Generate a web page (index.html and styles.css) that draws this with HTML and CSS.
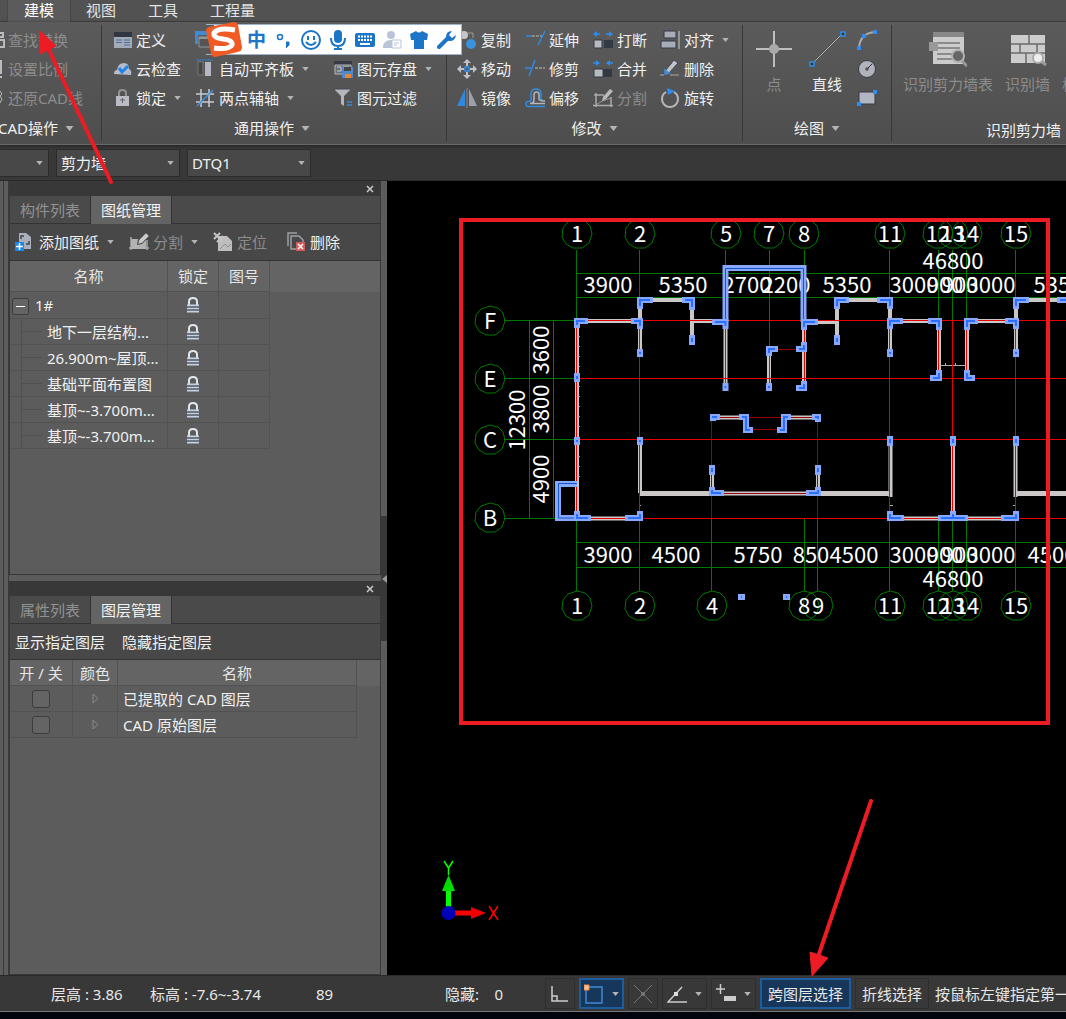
FILE: index.html
```html
<!DOCTYPE html>
<html lang="zh-CN">
<head>
<meta charset="utf-8">
<meta name="viewport" content="width=device-width, initial-scale=1">
<title>建模</title>
<link rel="stylesheet" href="styles.css">
</head>
<body>
<svg class="defs" width="0" height="0" aria-hidden="true">
  <symbol id="caret" viewBox="0 0 8 5"><path d="M0 0h8L4 5z" fill="#b4b4b4"/></symbol>
  <symbol id="lock" viewBox="0 0 14 16"><path d="M3 8V4.500Q3 1 7 1t4 3.500V8" fill="none" stroke="#dfe6ee" stroke-width="2"/><path d="M1 8.500h12M1 11.500h12M1 14.500h12" stroke="#c5d2e2" stroke-width="2"/><path d="M1 10h12M1 13h12" stroke="#4a5664"/></symbol>
  <symbol id="split" viewBox="0 0 20 20"><path d="M2 5v13M18 8v10M0 16h20" stroke="#a8a8a8" stroke-width="1.500" fill="none"/><path d="M2 7h7l-1 6 5-1 4-4v9H2z" fill="#b2b2b2"/><path d="M9 12l1-4 7-7 3 3-7 7z" fill="#cacaca" stroke="#555" stroke-width=".5"/></symbol>
</svg>

<nav class="menu">
  <a class="menu-tab active" href="#">建模</a>
  <a class="menu-tab" href="#">视图</a>
  <a class="menu-tab" href="#">工具</a>
  <a class="menu-tab" href="#">工程量</a>
</nav>

<header class="ribbon">
  <section class="group cad">
    <div class="tools">
      <button class="tool off"><svg class="half" viewBox="0 0 6 20"><path d="M0 3h3v4H0M0 10h4v7H0" fill="none" stroke="#bbb" stroke-width="2"/></svg>查找替换</button>
      <button class="tool off"><svg class="half" viewBox="0 0 6 20"><path d="M1 1v14M0 18h2" fill="none" stroke="#bbb" stroke-width="2"/></svg>设置比例</button>
      <button class="tool off"><svg class="half" viewBox="0 0 6 20"><path d="M0 3l2 3-2 2 2 3-2 4" fill="none" stroke="#bbb" stroke-width="1"/></svg>还原CAD线</button>
    </div>
    <button class="group-title">CAD操作<svg class="caret"><use href="#caret"/></svg></button>
  </section>
  <section class="group common">
    <div class="tools">
      <button class="tool"><svg viewBox="0 0 20 20"><path d="M2 2h18v5H2z" fill="#2f3842"/><path d="M2 7h18v11H2z" fill="#a3abb8"/><path d="M4 10h6M4 12.500h6M12 10h6M12 12.500h6M12 15h6" stroke="#4c6f9a"/></svg>定义</button>
      <button class="tool"><svg viewBox="0 0 20 20"><path d="M2 15q0-4 3-4 1-7 7-7 5 0 5 6 3 1 2 6z" fill="#b4bccb"/><path d="M7 9l3 4 6-6" fill="none" stroke="#1f83e6" stroke-width="3"/></svg>云检查</button>
      <button class="tool"><svg viewBox="0 0 20 20"><path d="M7 9V5q0-3 3.500-3T14 5v4" fill="none" stroke="#929292" stroke-width="2"/><path d="M4 8h13v10H4z" fill="#b9bcc4"/><path d="M10.500 10v5M8 12h5" stroke="#666"/></svg>锁定<svg class="caret"><use href="#caret"/></svg></button>
      <button class="tool" aria-label="复制到其它层"><svg viewBox="0 0 20 20"><path d="M0 1h15v4H3v9H0z" fill="#3f8ad5"/><path d="M4 7h14v10H4z" fill="#555" stroke="#8d9698"/><path d="M4 8h14" stroke="#8d9698" stroke-width="2"/></svg></button>
      <button class="tool"><svg viewBox="0 0 20 20"><path d="M1 1h17" stroke="#377ec7"/><path d="M3 3h5v13H3z" fill="#464646" stroke="#777"/><path d="M10 3h6v14h-6z" fill="#b5b7c2"/></svg>自动平齐板<svg class="caret"><use href="#caret"/></svg></button>
      <button class="tool"><svg viewBox="0 0 20 20"><path d="M6 1v18M14 1v18M1 6h18M1 14h18" stroke="#c8ccd3" stroke-width="1.500"/><path d="M2 18L18 2" stroke="#3d91e8" stroke-width="1.500"/></svg>两点辅轴<svg class="caret"><use href="#caret"/></svg></button>
      <span></span>
      <button class="tool"><svg viewBox="0 0 20 20"><path d="M1 2h18v4H1z" fill="#343b44"/><path d="M2 6h16v9H2z" fill="#6b7078" stroke="#b4b8c0"/><path d="M4 8h4v4H4M10 8h6" stroke="#ccc" fill="none"/><path d="M9 8h11v11H9z" fill="#4d8bce"/><path d="M11 8h7v4h-7z" fill="#444"/><path d="M12 15h6v4h-6z" fill="#ef8330"/></svg>图元存盘<svg class="caret"><use href="#caret"/></svg></button>
      <button class="tool"><svg viewBox="0 0 20 20"><path d="M2 1h15v1l-6 6v10l-3-2V8L2 2z" fill="#b4b6be"/><path d="M1 1h17" stroke="#42474e"/><path d="M14 14h5M14 17h5" stroke="#3289dc" stroke-width="1.500"/></svg>图元过滤</button>
    </div>
    <div class="group-title">通用操作<svg class="caret"><use href="#caret"/></svg></div>
  </section>
  <section class="group modify">
    <div class="tools">
      <button class="tool"><svg viewBox="0 0 20 20"><circle cx="7" cy="5" r="4" fill="#c5c5c5"/><path d="M11 3h5v5" fill="none" stroke="#999"/><circle cx="14" cy="14" r="5" fill="#3c91dd"/></svg>复制</button>
      <button class="tool"><svg viewBox="0 0 20 20"><path d="M10 0l4 4H6zM10 20l4-4H6zM0 10l4-4v8zM20 10l-4-4v8z" fill="#c0c2ca"/><path d="M10 3v4M10 13v4M3 10h4M13 10h4" stroke="#c0c2ca" stroke-width="2"/><path d="M8 8h4v4H8z" fill="none" stroke="#2f8deb" stroke-width="1.500"/></svg>移动</button>
      <button class="tool"><svg viewBox="0 0 20 20"><path d="M8 1v17H0z" fill="#2f88dd"/><path d="M12 1v17h8z" fill="#9da0ab"/><path d="M10 0v20" stroke="#888"/></svg>镜像</button>
      <button class="tool"><svg viewBox="0 0 20 20"><path d="M1 6h6M20 1l-7 14" stroke="#308ae0" stroke-width="1.500"/><path d="M7 6h10" stroke="#bbb" stroke-dasharray="3 1"/></svg>延伸</button>
      <button class="tool"><svg viewBox="0 0 20 20"><path d="M0 9h6M10 1L4 17" stroke="#308ae0" stroke-width="1.500"/><path d="M10 9h10" stroke="#bbb" stroke-dasharray="3 1"/></svg>修剪</button>
      <button class="tool"><svg viewBox="0 0 20 20"><path d="M20 18.500H3q-2 0-2-2v-1q0-2 2-2h1q2 0 2-2V6q0-5 5-5t5 5v4q0 2 2 2" fill="none" stroke="#348be0" stroke-width="1.500"/><path d="M20 15.500H5q4 0 4-4V7q0-3 2.500-3T14 7v4q0 2 6 2" fill="none" stroke="#b4b6bc" stroke-width="1.500"/></svg>偏移</button>
      <button class="tool"><svg viewBox="0 0 20 20"><path d="M0 4l4-3v6zM20 4l-4-3v6z" fill="#2e8df0"/><path d="M3 4h4M13 4h4" stroke="#2e8df0" stroke-width="1.500"/><path d="M1 10h8v8H1z" fill="#b8bac2" stroke="#343a43"/><path d="M11 10h9v8h-9z" fill="#343a43"/></svg>打断</button>
      <button class="tool"><svg viewBox="0 0 20 20"><path d="M7 4L3 1v6zM13 4l4-3v6z" fill="#2e8df0"/><path d="M0 4h4M16 4h4" stroke="#2e8df0" stroke-width="1.500"/><path d="M1 10h9v8H1z" fill="#b8bac2" stroke="#343a43"/><path d="M10 10h9v8h-9z" fill="#343a43"/></svg>合并</button>
      <button class="tool off"><svg viewBox="0 0 20 20"><path d="M3 5v14M18 9v10M1 7h10M0 17.500h20" stroke="#aaa" stroke-width="1.500" fill="none"/><path d="M3 17l6-4 9-3" fill="none" stroke="#999"/><path d="M9 13l1-4 7-8 3 2-7 8z" fill="#bbb"/></svg>分割</button>
      <button class="tool"><svg viewBox="0 0 20 20"><path d="M4 1h12v7H4zM1 11h15v7H1z" fill="#a8acb7" stroke="#333b46"/><path d="M19 1v18" stroke="#ccc"/></svg>对齐<svg class="caret"><use href="#caret"/></svg></button>
      <button class="tool"><svg viewBox="0 0 20 20"><path d="M0 16h4M10 16h9" stroke="#aaa"/><path d="M5 12L14 1l4 3-9 10-5 1z" fill="#c0c2ca" stroke="#3c4550"/><path d="M5 11l4 3-4 1z" fill="#3e90db" stroke="#3e90db" stroke-width="1.500"/></svg>删除</button>
      <button class="tool"><svg viewBox="0 0 20 20"><path d="M14 4a8 8 0 1 1-8 0" fill="none" stroke="#b4b6b9" stroke-width="2"/><path d="M7 0l8 3-7 4z" fill="#2e8df0"/></svg>旋转</button>
    </div>
    <div class="group-title">修改<svg class="caret"><use href="#caret"/></svg></div>
  </section>
  <section class="group draw">
    <div class="big-tools">
      <button class="big off"><svg viewBox="0 0 38 38"><path d="M19 1v14M19 23v14M1 19h14M23 19h14" stroke="#e0e0e0" stroke-width="1.500"/><circle cx="19" cy="19" r="5" fill="#aaa"/></svg>点</button>
      <button class="big"><svg viewBox="0 0 38 38"><path d="M5 33L33 5" stroke="#aaa"/><path d="M2 32h4v4H2zM33 2h4v4h-4z" fill="#333" stroke="#2e8df0" stroke-width="1.500"/></svg>直线</button>
      <div class="shapes">
        <button class="tool" aria-label="弧"><svg viewBox="0 0 20 20"><path d="M2 18Q3 3 18 2" fill="none" stroke="#aaa" stroke-width="2"/><path d="M0 16h4v4H0zM5 4h4v4H5zM16 0h4v4h-4z" fill="#2e8df0"/></svg></button>
        <button class="tool" aria-label="圆"><svg viewBox="0 0 20 20"><circle cx="10" cy="10" r="8.500" fill="#b0b3bc" stroke="#343b44"/><path d="M11 9l4-4M9 9h2v2H9z" stroke="#333" fill="none"/></svg></button>
        <button class="tool" aria-label="矩形"><svg viewBox="0 0 20 20"><path d="M2 4h16v12H2z" fill="#b4b5c2" stroke="#343b44"/><path d="M0 14h4v4H0zM16 2h4v4h-4z" fill="#2e8df0"/></svg></button>
      </div>
    </div>
    <div class="group-title">绘图<svg class="caret"><use href="#caret"/></svg></div>
  </section>
  <section class="group wall-group">
    <div class="big-tools">
      <button class="big off"><svg viewBox="0 0 38 38"><path d="M4 2h31v5H4z" fill="#888"/><path d="M4 7h31v27H4z" fill="#ccc"/><path d="M8 13h23M8 18h23M8 24h16M8 29h16" stroke="#777" stroke-width="1.500"/><path d="M0 12h9v9H0z" fill="#999"/><circle cx="29" cy="26" r="6" fill="#666" stroke="#b0b0b0" stroke-width="2"/><path d="M33 31l5 5" stroke="#999" stroke-width="3"/></svg>识别剪力墙表</button>
      <button class="big off"><svg viewBox="0 0 38 38"><path d="M2 5h34v28H2z" fill="#ccc"/><path d="M2 14h34M2 23h34M20 5v9M11 14v9M28 14v9M17 23v10" stroke="#6b6b6b" stroke-width="1.500"/><circle cx="29" cy="28" r="5" fill="#eee" stroke="#aaa" stroke-width="2"/><path d="M33 32l4 3" stroke="#999" stroke-width="3"/></svg>识别墙</button>
      <button class="big off clipped">校核墙图元</button>
    </div>
    <div class="group-title">识别剪力墙</div>
  </section>
</header>

<div class="combos">
  <label class="combo floor"><select aria-label="楼层"><option></option></select><svg class="caret"><use href="#caret"/></svg></label>
  <label class="combo"><select aria-label="构件类型"><option>剪力墙</option></select><svg class="caret"><use href="#caret"/></svg></label>
  <label class="combo"><select aria-label="构件"><option>DTQ1</option></select><svg class="caret"><use href="#caret"/></svg></label>
</div>

<main class="work">
  <div class="edge"></div>
  <div class="dock">
    <section class="panel">
      <div class="panel-bar"><button class="close" aria-label="关闭"><svg viewBox="0 0 8 8"><path d="M1 1l6 6M7 1L1 7" stroke="#ccc" stroke-width="1.500"/></svg></button></div>
      <div class="tabs"><button class="tab">构件列表</button><button class="tab active">图纸管理</button></div>
      <div class="toolbar">
        <button class="tool"><svg viewBox="0 0 20 20"><path d="M4 1h7l5 4v12H4z" fill="#a9afbc"/><path d="M6 7V4h3M11 12h3V9" stroke="#444" fill="none" stroke-width="1.500"/><path d="M0 10h9v9H0z" fill="#1d86ee"/><path d="M4.500 11v7M1 14.500h7" stroke="#fff" stroke-width="1.500"/></svg>添加图纸<svg class="caret"><use href="#caret"/></svg></button>
        <button class="tool off"><svg><use href="#split"/></svg>分割<svg class="caret"><use href="#caret"/></svg></button>
        <button class="tool off"><svg viewBox="0 0 20 20"><path d="M5 4h9l5 5v10H5z" fill="#bdbdbd"/><path d="M7 17l5-5 3 3 3-3" stroke="#8d8d8d" fill="none"/><path d="M1 1l8 8M7 1L1 7M4 10l6-6" stroke="#c5c5c5" stroke-width="2"/></svg>定位</button>
        <button class="tool remove"><svg viewBox="0 0 20 20"><path d="M2 14V1h9M5 4h8l4 4v9H5z" fill="none" stroke="#9aa0a4" stroke-width="1.500"/><path d="M10 10h9v9h-9z" fill="#d65a5a"/><path d="M12 12l5 5M17 12l-5 5" stroke="#fff" stroke-width="1.500"/></svg>删除</button>
      </div>
      <div class="grid-area">
        <table class="sheet drawings">
          <thead><tr><th class="c-name">名称</th><th class="c-lock">锁定</th><th class="c-num">图号</th><th class="fill"></th></tr></thead>
          <tbody>
            <tr><td class="root"><button class="toggle" aria-label="折叠"></button>1#</td><td class="mid"><svg class="lock"><use href="#lock"/></svg></td><td></td></tr>
            <tr><td class="leaf">地下一层结构...</td><td class="mid"><svg class="lock"><use href="#lock"/></svg></td><td></td></tr>
            <tr><td class="leaf">26.900m~屋顶...</td><td class="mid"><svg class="lock"><use href="#lock"/></svg></td><td></td></tr>
            <tr><td class="leaf">基础平面布置图</td><td class="mid"><svg class="lock"><use href="#lock"/></svg></td><td></td></tr>
            <tr><td class="leaf">基顶~-3.700m...</td><td class="mid"><svg class="lock"><use href="#lock"/></svg></td><td></td></tr>
            <tr><td class="leaf">基顶~-3.700m...</td><td class="mid"><svg class="lock"><use href="#lock"/></svg></td><td></td></tr>
          </tbody>
        </table>
      </div>
    </section>
    <section class="panel">
      <div class="panel-bar"><button class="close" aria-label="关闭"><svg viewBox="0 0 8 8"><path d="M1 1l6 6M7 1L1 7" stroke="#ccc" stroke-width="1.500"/></svg></button></div>
      <div class="tabs"><button class="tab">属性列表</button><button class="tab active">图层管理</button></div>
      <div class="toolbar wide">
        <button class="tool">显示指定图层</button>
        <button class="tool">隐藏指定图层</button>
      </div>
      <div class="grid-area">
        <table class="sheet layers">
          <thead><tr><th class="c-on">开 / 关</th><th class="c-color">颜色</th><th class="c-layer">名称</th><th class="fill"></th></tr></thead>
          <tbody>
            <tr><td class="mid"><input type="checkbox" aria-label="已提取的 CAD 图层"></td><td class="mid"><svg class="expand" viewBox="0 0 7 11"><path d="M1 1l5 4.500L1 10z" fill="none" stroke="#8a8a8a"/></svg></td><td>已提取的 CAD 图层</td></tr>
            <tr><td class="mid"><input type="checkbox" aria-label="CAD 原始图层"></td><td class="mid"><svg class="expand" viewBox="0 0 7 11"><path d="M1 1l5 4.500L1 10z" fill="none" stroke="#8a8a8a"/></svg></td><td>CAD 原始图层</td></tr>
          </tbody>
        </table>
      </div>
    </section>
  </div>
  <div class="splitter"><div class="grip"><svg viewBox="0 0 5 8"><path d="M5 0v8L0 4z" fill="#999"/></svg></div></div>
  <div class="canvas">
    <svg class="plan" role="img" aria-label="结构平面图">
      <defs>
        <polygon id="b" points="15,0 12,9 5,14 -4,14 -11,10 -15,3 -14,-6 -9,-12 0,-15 8,-13 13,-8"/>
        <path id="cols" d="M577 325v-4h8M634 321h6v5M640 352v2M577 376v3M577 440v2M640 440v2M640 306v-6h10M685 300h7v7M692 338v4M715 322h10.500v4M725.500 386v2M804 327v-5h11M769 353v-4h6M799 349h5v-4M769 386v2M799 388h5v-4M837 306v-6h9M880 300h10v6M837 338v4M890 326v-5h10M931 321h8v6M890 352v2M939 373v5h-6M967 373v5h5M967 327v-6h8M1008 321h8v5M1016 352v2M1016 306v-6h10M1060 300h6M713 418v-1h4M742 417h4v13h4M780 430h4v-13h4M815 417h3v2M890 439v4M953 439v4M1016 439v4M712 468v4M712 490v3h9M818 468v4M818 490v3h-9M577 514v4h11M628 518h12v-4M890 514v4h11M941 518h24M953 514v4M1004 518h12v-4M741 597h1M786 597h1"/>
      </defs>
      <g transform="translate(-387 -181)">
        <g class="green">
          <path d="M576.500 250v71M639.500 250v51M725.500 250v16M769.500 250v71M804.500 250v71M889.500 250v51M938.500 250v71M952.500 250v71M966.500 250v71M1015.500 250v51M577 273.500H1600M577 297.500H1600M504 320.500h73M504 378.500h73M504 439.500h73M504 518.500h73M529.500 320v199M553.500 320v199M577 542.500H1600M577 567.500H1600M576.500 518v73M639.500 518v73M711.500 518v73M804.500 518v73M817.500 518v73M889.500 518v73M938.500 518v73M952.500 518v73M966.500 518v73M1015.500 518v73"/>
          <use href="#b" x="577" y="234"/><use href="#b" x="640" y="234"/><use href="#b" x="726" y="234"/><use href="#b" x="769" y="234"/><use href="#b" x="804" y="234"/><use href="#b" x="890" y="234"/><use href="#b" x="938" y="234"/><use href="#b" x="953" y="234"/><use href="#b" x="967" y="234"/><use href="#b" x="1016" y="234"/>
          <use href="#b" x="577" y="606"/><use href="#b" x="640" y="606"/><use href="#b" x="712" y="606"/><use href="#b" x="804" y="606"/><use href="#b" x="818" y="606"/><use href="#b" x="890" y="606"/><use href="#b" x="938" y="606"/><use href="#b" x="953" y="606"/><use href="#b" x="967" y="606"/><use href="#b" x="1016" y="606"/>
          <use href="#b" x="490" y="321"/><use href="#b" x="490" y="379"/><use href="#b" x="490" y="440"/><use href="#b" x="490" y="518"/>
        </g>
        <g class="dim">
          <text x="577" y="242">1</text><text x="640" y="242">2</text><text x="726" y="242">5</text><text x="769" y="242">7</text><text x="804" y="242">8</text><text x="890" y="242">11</text><text x="938" y="242">12</text><text x="953" y="242">13</text><text x="967" y="242">14</text><text x="1016" y="242">15</text>
          <text x="953" y="269">46800</text>
          <text x="608" y="293">3900</text><text x="683" y="293">5350</text><text x="747" y="293">2700</text><text x="786" y="293">2200</text><text x="847" y="293">5350</text><text x="914" y="293">3000</text><text x="945" y="293">900</text><text x="960" y="293">900</text><text x="991" y="293">3000</text><text x="1058" y="293">5350</text>
          <text x="608" y="563">3900</text><text x="676" y="563">4500</text><text x="758" y="563">5750</text><text x="811" y="563">850</text><text x="854" y="563">4500</text><text x="914" y="563">3000</text><text x="945" y="563">900</text><text x="960" y="563">900</text><text x="991" y="563">3000</text><text x="1052" y="563">4500</text>
          <text x="953" y="587">46800</text>
          <text x="577" y="614">1</text><text x="640" y="614">2</text><text x="712" y="614">4</text><text x="804" y="614">8</text><text x="818" y="614">9</text><text x="890" y="614">11</text><text x="938" y="614">12</text><text x="953" y="614">13</text><text x="967" y="614">14</text><text x="1016" y="614">15</text>
          <text x="490" y="329">F</text><text x="490" y="387">E</text><text x="490" y="448">C</text><text x="490" y="526">B</text>
          <text transform="translate(549 350) rotate(-90)">3600</text><text transform="translate(549 409) rotate(-90)">3800</text><text transform="translate(549 479) rotate(-90)">4900</text><text transform="translate(525 420) rotate(-90)">12300</text>
        </g>
        <path class="wall" d="M577 321h63M577 321v197M577 518.500h63M640 354v-54h52v43M692 321h33.500v67M804 322h34M837 343v-43h53v55M890 321h49v57M967 378v-57h49M1016 355v-55H1600M769 388v-39M804 322v66M712 417.500h34M784 417.500h34M640 438v55M712 470v23M818 470v23M712 493.500h106M890.500 440v57M953 440v78M1015.500 440v57M890 518.500h126"/>
        <path class="slab" d="M640 493.500h72M818 493.500h73M1014 493.500H1600"/>
        <path class="thin-wall" d="M940 365.500h27M945.500 363v3M955.500 363v3M578 336.500h2M578 346.500h2M578 356.500h2M578 366.500h2M578 386.500h2M578 396.500h2M578 406.500h2M578 416.500h2M578 426.500h2M578 456.500h2M578 466.500h2M578 476.500h2M639 505.500h2M890 505.500h3M1013 505.500h3"/>
        <path class="axis" d="M577 320.500H1600M577 378.500H1600M577 439.500H1600M577 518.500H1600M576.500 321v197M639.500 321v197M725.500 321v67M769.500 321v67M804.500 321v67M889.500 321v197M938.500 321v57M952.500 321v197M966.500 321v57M1015.500 321v197"/>
        <path class="axis dark" d="M712 417.500h106M746 429.500h39M769 349.500h35M712 493.500h106M711.500 417v101M817.500 417v101"/>
        <path class="balcony" d="M725.500 322v-54h78v54M577 484h-19v34h19"/>
        <path class="balcony-core" d="M725.500 322v-53.500h78v53.500M577 483.500h-18.500v34.500h19"/>
        <use href="#cols" class="column"/><use href="#cols" class="column-core"/>
        <rect class="mark" x="461" y="220" width="587" height="503"/>
        <path d="M448.500 909v-20" stroke="#0f0" stroke-width="5"/><path d="M442 891l6.500-16 6.500 16z" fill="#0d0"/>
        <path d="M453 913h18" stroke="#f00" stroke-width="5"/><path d="M471 907l15 6-15 6z" fill="#e00"/>
        <circle cx="448.500" cy="913" r="7" fill="#0000b8"/>
        <path d="M444 861l4.500 7 4.500-7M448.500 868v7" fill="none" stroke="#0f0" stroke-width="1.500"/>
        <path d="M489 906l9 14M498 906l-9 14" stroke="#f00" stroke-width="1.500"/>
      </g>
    </svg>
  </div>
</main>

<footer class="status">
  <span class="s-floor">层高 : 3.86</span>
  <span class="s-level">标高 : -7.6~-3.74</span>
  <span class="s-count">89</span>
  <span class="s-hidden">隐藏:&nbsp;&nbsp;&nbsp; 0</span>
  <div class="snap">
    <button class="sb sq" aria-label="正交"><svg viewBox="0 0 20 20"><path d="M2 2v15h16M2 12h5v5" fill="none" stroke="#ccc" stroke-width="1.500"/></svg></button>
    <button class="sb drop on" aria-label="捕捉"><svg viewBox="0 0 20 20"><path d="M2 3h16v16H2z" fill="none" stroke="#4189d6" stroke-width="1.500"/><path d="M0 1h5v5H0z" fill="#ffc090" stroke="#f08a48"/></svg><svg class="caret"><use href="#caret"/></svg></button>
    <button class="sb sq" aria-label="交点"><svg viewBox="0 0 20 20"><path d="M1 1l18 18M19 1L1 19" stroke="#777"/><circle cx="10" cy="10" r="2" fill="#777"/></svg></button>
    <button class="sb drop" aria-label="角度"><svg viewBox="0 0 20 20"><path d="M15 3L1 18h19" fill="none" stroke="#ccc" stroke-width="1.500"/><path d="M7 8h4v4H7z" fill="#ddd"/></svg><svg class="caret"><use href="#caret"/></svg></button>
    <button class="sb drop" aria-label="输入"><svg viewBox="0 0 20 20"><path d="M0 5h9M4.500 0v10" stroke="#ccc" stroke-width="1.500"/><path d="M8 12h12v5H8z" fill="#ccc"/></svg><svg class="caret"><use href="#caret"/></svg></button>
    <button class="sb text on">跨图层选择</button>
    <button class="sb text">折线选择</button>
  </div>
  <span class="hint">按鼠标左键指定第一个角点</span>
</footer>

<div class="ime">
  <svg class="ime-logo" viewBox="0 0 36 36"><path d="M3 5L28 0q3 0 4 3l4 22q0 4-4 5L9 35q-3 0-4-4L0 9q0-3 3-4z" fill="#f15a24"/><path d="M29 8Q12 5 8 11q-1 5 9 6 10 1 9 6-3 5-18 3" fill="none" stroke="#fff" stroke-width="5"/></svg>
  <span class="ime-mode">中</span>
  <svg viewBox="0 0 20 20"><circle cx="6" cy="7" r="2.500" fill="none" stroke="#1d75c8" stroke-width="1.500"/><path d="M12 12h3v3l-3 3" fill="#1d75c8" stroke="#1d75c8"/></svg>
  <svg viewBox="0 0 20 20"><circle cx="10" cy="10" r="9" fill="none" stroke="#1d75c8" stroke-width="2"/><path d="M7 6v4M13 6v4M5 12q5 6 10 0" fill="none" stroke="#1d75c8" stroke-width="2"/></svg>
  <svg viewBox="0 0 20 20"><rect x="6" y="0" width="8" height="13" rx="4" fill="#1d75c8"/><path d="M3 8q0 8 7 8t7-8M10 16v3M6 19h8" fill="none" stroke="#1d75c8" stroke-width="2"/></svg>
  <svg viewBox="0 0 20 20"><rect x="0" y="3" width="20" height="14" rx="2" fill="#1d75c8"/><path d="M3 6.500h14M3 10h14" stroke="#fff" stroke-width="2" stroke-dasharray="2 1"/><path d="M5 14h10" stroke="#fff" stroke-width="2"/></svg>
  <svg viewBox="0 0 20 20"><circle cx="9" cy="5" r="4" fill="#b9c3da"/><path d="M1 18q0-8 8-8t8 8z" fill="#b9c3da"/><path d="M10 10h9v8h-9z" fill="#fff" stroke="#b9c3da"/><path d="M12 13h5M12 15h3" stroke="#b9c3da"/></svg>
  <svg viewBox="0 0 20 20"><path d="M7 1q3 3 6 0l6 3-1 6h-3v9H5v-9H2L1 4z" fill="#1d75c8"/></svg>
  <svg viewBox="0 0 20 20"><path d="M3 17l9-9" stroke="#1d75c8" stroke-width="4" stroke-linecap="round"/><path d="M16 1q-6 0-6 6 0 4 4 4 5 0 6-6l-4 3-3-3z" fill="#1d75c8"/></svg>
</div>

<svg class="pointers" aria-hidden="true"><g fill="#ed1c24" stroke="#ed1c24"><path d="M111 182L49 50M871 801L819 954" stroke-width="4" stroke-linecap="round"/><path d="M40 31v23l16-8zM812 976l-2-24 18 6z" stroke-width="1"/></g></svg>
</body>
</html>
```
FILE: styles.css
```css
* { box-sizing: border-box; }
html, body { height: 100%; }
body {
  margin: 0;
  position: relative;
  display: flex;
  flex-direction: column;
  overflow: hidden;
  background: #383838;
  color: #f0f0f0;
  font: 15px/20px "Noto Sans", "Noto Sans CJK SC", sans-serif;
  white-space: nowrap;
}
button, select { font: inherit; color: inherit; background: none; border: 0; padding: 0; margin: 0; white-space: nowrap; }
svg { flex: none; display: block; }
.defs { position: absolute; }
.caret { width: 8px; height: 5px; margin-left: 4px; }

/* menu tabs */
.menu { flex: none; display: flex; height: 22px; padding-left: 8px; background: #525252; border-bottom: 1px solid #444; }
.menu-tab { padding: 0 16px; color: #e4e4e4; text-decoration: none; }
.menu-tab.active { background: #5b5b5b; height: 22px; color: #fff; box-shadow: -1px 0 #484848, 1px 0 #484848; }

/* ribbon */
.ribbon { flex: none; display: flex; height: 123px; padding-top: 3px; background: linear-gradient(#5b5b5b, #4e4e4e); border-bottom: 1px solid #686868; box-shadow: 0 1px 3px #222; }
.group { flex: none; display: flex; flex-direction: column; border-right: 1px solid #383838; margin-bottom: 3px; }
.tools { display: grid; grid-template-rows: repeat(3, 29px); grid-auto-flow: column; justify-content: start; }
.tool { display: flex; align-items: center; gap: 4px; }
.tool svg { width: 20px; height: 20px; }
.tool .caret, .sb .caret { width: 7px; height: 4px; }
.tool .half { width: 6px; }
.off { color: #8c8c8c; }
.group-title { display: flex; align-items: center; justify-content: center; gap: 3px; height: 29px; padding-top: 3px; }
.group-title .caret { width: 9px; height: 5px; }
.cad { width: 102px; }
.cad .tool { gap: 2px; }
.cad .group-title { justify-content: flex-start; margin-left: -2px; }
.common { width: 345px; }
.common .tools { grid-template-columns: 83px 138px auto; padding-left: 10px; }
.common .group-title { padding-right: 4px; }
.modify { width: 296px; }
.modify .tools { grid-template-columns: 68px 68px 67px auto; padding-left: 10px; }
.draw { width: 149px; }
.big-tools { display: flex; height: 87px; }
.big { display: flex; flex-direction: column; align-items: center; padding-top: 5px; gap: 6px; }
.big svg { width: 38px; height: 38px; }
.draw .big-tools { padding-left: 12px; gap: 15px; }
.shapes { display: grid; grid-template-rows: repeat(3, 29px); margin-left: -4px; }
.wall-group { flex: 1 1 0; min-width: 0; border: 0; overflow: hidden; }
.wall-group .big-tools { padding-left: 11px; gap: 12px; }
.wall-group .big { flex: none; }
.wall-group .clipped { padding-top: 49px; }
.wall-group .group-title { justify-content: flex-end; padding: 6px 5px 0 0; }

/* selectors below the ribbon */
.combos { flex: none; display: flex; align-items: center; gap: 7px; height: 36px; border-bottom: 1px solid #2a2a2a; }
.combo { display: flex; align-items: center; width: 124px; height: 28px; border: 1px solid #2b2b2b; background: #484848; }
.combo select { flex: 1; min-width: 0; height: 26px; padding: 0 4px; appearance: none; outline: 0; }
.combo .caret { margin: 0 5px; width: 7px; height: 4px; }
.floor { width: 49px; border-left: 0; }

/* work area */
.work { flex: 1; min-height: 0; display: flex; }
.edge { width: 9px; background: linear-gradient(90deg, #5c5c5c 3px, #3a3a3a 3px, #3a3a3a 4px, #5c5c5c 4px, #5c5c5c 8px, #3a3a3a 8px); }
.dock { width: 372px; display: flex; flex-direction: column; gap: 6px; background: #5c5c5c; }
.panel { flex: 1; min-height: 0; display: flex; flex-direction: column; background: #5c5c5c; border: 1px solid #383838; border-top: 0; }
.panel-bar { height: 15px; display: flex; justify-content: flex-end; align-items: center; padding-right: 6px; background: #383838; }
.close svg { width: 8px; height: 8px; }
.tabs { display: flex; height: 28px; background: #4a4a4a; border-bottom: 1px solid #333; }
.tab { padding: 0 10px; color: #929292; border-right: 1px solid #333; height: 27px; }
.tab.active { background: #646464; color: #f2f2f2; height: 28px; }
.toolbar { display: flex; gap: 15px; height: 37px; padding-left: 5px; background: #484848; border-bottom: 1px solid #333; }
.toolbar.wide { gap: 17px; height: 36px; }
.toolbar .remove { margin-left: 4px; }
.grid-area { flex: 1; min-height: 0; overflow: hidden; }
.sheet { width: 100%; table-layout: fixed; border-collapse: separate; border-spacing: 0; }
.sheet th { height: 26px; padding: 0; font-weight: 400; background: #646464; border-right: 1px solid #525252; border-bottom: 1px solid #525252; color: #e6e6e6; }
.sheet .fill { border: 0; }
.drawings th { height: 31px; }
.sheet td { height: 26px; padding: 0 0 0 5px; border-right: 1px solid #525252; border-bottom: 1px solid #525252; overflow: hidden; }
.c-name { width: 158px; }
.c-lock, .c-num { width: 51px; }
.c-on { width: 63px; }
.c-color { width: 45px; }
.c-layer { width: 239px; }
.sheet td.mid { padding: 0; text-align: center; }
.mid svg { margin: 0 auto; }
.lock { width: 14px; height: 16px; }
.expand { width: 7px; height: 11px; }
.sheet td.root { padding-left: 2px; height: 27px; }
.root .toggle { display: inline-block; width: 17px; height: 17px; margin-right: 6px; vertical-align: -3px; border: 1px solid #3c3c3c; border-radius: 2px; background: linear-gradient(#fff, #fff) center / 9px 1px no-repeat #646464; }
.sheet td.leaf { padding-left: 37px; background: linear-gradient(#505050, #505050) 11px 12px / 21px 1px no-repeat, linear-gradient(#505050, #505050) 11px 0 / 1px 100% no-repeat; }
.sheet input { appearance: none; display: block; width: 18px; height: 18px; margin: 0 auto; border: 1px solid #3c3c3c; border-radius: 3px; background: #646464; }
.splitter { width: 6px; background: linear-gradient(#5c5c5c 335px, #383838 335px, #383838 460px, #5c5c5c 460px); }
.grip { display: flex; justify-content: flex-end; padding-top: 394px; }
.grip svg { width: 5px; height: 8px; }

/* drawing */
.canvas { flex: 1; min-width: 0; background: #000; overflow: hidden; }
.plan { width: 100%; height: 100%; }
.green { fill: none; stroke: #007800; }
.dim { fill: #fff; font: 22px "Noto Sans CJK SC", sans-serif; text-anchor: middle; }
.wall { fill: none; stroke: #cbc7c7; stroke-width: 4px; }
.slab { stroke: #cbc7c7; stroke-width: 5px; }
.thin-wall { fill: none; stroke: #b0b0b0; }
.axis { fill: none; stroke: #e80000; }
.axis.dark { stroke: #900; }
.balcony { fill: none; stroke: #86a8ff; stroke-width: 6px; }
.balcony-core { fill: none; stroke: #1457c8; stroke-width: 1px; }
.column { fill: none; stroke: #86a8ff; stroke-width: 6px; stroke-linecap: square; }
.column-core { fill: none; stroke: #2a6fff; stroke-width: 2px; }
.mark { fill: none; stroke: #ed1c24; stroke-width: 4px; }

/* status bar */
.status { flex: none; display: flex; align-items: center; height: 37px; margin-bottom: 7px; padding-left: 51px; border-top: 1px solid #2a2a2a; border-bottom: 1px solid #777; box-shadow: 0 7px #02060c; overflow: hidden; color: #e8e8e8; }
.status > span { flex: none; }
.s-floor { width: 99px; }
.s-level { width: 166px; }
.s-count { width: 129px; }
.s-hidden { width: 100px; }
.snap { flex: none; display: flex; gap: 4px; }
.sb { display: flex; align-items: center; justify-content: center; height: 31px; border: 1px solid #2e2e2e; }
.sb svg { width: 20px; height: 20px; }
.sb .caret { margin-left: 8px; }
.sq { width: 30px; }
.drop { width: 45px; }
.text { padding: 0 6px; }
.on { background: #16365a; border: 2px solid #1f5c9c; }
.hint { margin-left: 6px; }

/* floating input-method bar */
.ime { position: absolute; left: 206px; top: 24px; height: 31px; width: 256px; display: flex; align-items: center; gap: 7px; border: 1px solid #9db4cc; background: linear-gradient(90deg, transparent 8px, #fff 8px); border-left: 0; }
.ime svg { width: 20px; height: 20px; }
.ime .ime-logo { width: 36px; height: 36px; margin-right: -2px; }
.ime-mode { width: 20px; color: #1d75c8; font-size: 19px; font-weight: 700; }
.pointers { position: absolute; left: 0; top: 0; width: 100%; height: 100%; pointer-events: none; }
```
